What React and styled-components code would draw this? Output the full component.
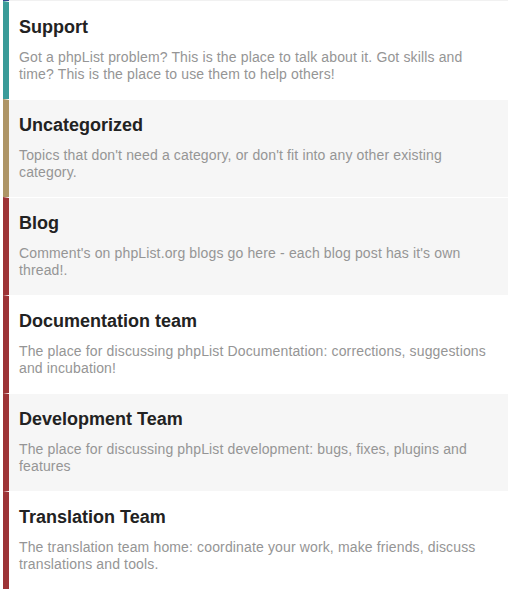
import React from 'react'
import styled, { createGlobalStyle } from 'styled-components'

const GlobalStyle = createGlobalStyle`
    html, body {
        margin: 0;
        padding: 0;
        background: #fff;
        font-family: "Liberation Sans", Arial, sans-serif;
    }
`;

const categories = [
    {
        name: 'Support',
        color: '#3a9b99',
        shaded: false,
        description: 'Got a phpList problem? This is the place to talk about it. Got skills and time? This is the place to use them to help others!'
    },
    {
        name: 'Uncategorized',
        color: '#ae9566',
        shaded: true,
        description: "Topics that don't need a category, or don't fit into any other existing category."
    },
    {
        name: 'Blog',
        color: '#9d3336',
        shaded: true,
        description: "Comment's on phpList.org blogs go here - each blog post has it's own thread!."
    },
    {
        name: 'Documentation team',
        color: '#9d3336',
        shaded: false,
        description: 'The place for discussing phpList Documentation: corrections, suggestions and incubation!'
    },
    {
        name: 'Development Team',
        color: '#9d3336',
        shaded: true,
        description: 'The place for discussing phpList development: bugs, fixes, plugins and features'
    },
    {
        name: 'Translation Team',
        color: '#9d3336',
        shaded: false,
        description: 'The translation team home: coordinate your work, make friends, discuss translations and tools.'
    }
];

const List = styled.div`
    margin-left: 3px;
    display: flex;
    flex-direction: column;
`;

const TopEdge = styled.div`
    height: 1px;
    background: #f1f1f1;
    border-left: 6px solid #34448f;
`;

const Row = styled.div`
    border-left: 6px solid ${p => p.$color};
    border-top: 1px solid ${p => p.$first ? 'transparent' : '#fff'};
    background: ${p => p.$shaded ? '#f6f6f6' : '#fff'};
    padding: 14px 17px 15px 10px;
    min-height: 68px;

    .title {
        font-size: 18px;
        line-height: 22px;
        font-weight: 700;
        color: #222;
    }

    .desc {
        margin-top: 11px;
        font-size: 14px;
        line-height: 17px;
        letter-spacing: 0.14px;
        color: #959595;
    }
`;

export default function App() {
    return (
        <>
            <GlobalStyle />
            <List>
                <TopEdge />
                {categories.map((c, i) => (
                    <Row key={c.name} $color={c.color} $shaded={c.shaded} $first={i === 0}>
                        <div className="title">{c.name}</div>
                        <div className="desc">{c.description}</div>
                    </Row>
                ))}
            </List>
        </>
    )
}
